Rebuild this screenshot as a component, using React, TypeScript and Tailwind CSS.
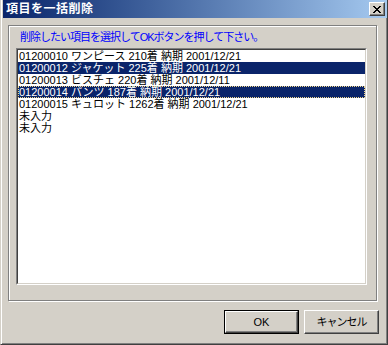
import React from "react";

const items = [
  { text: "01200010 ワンピース 210着 納期 2001/12/21", selected: false },
  { text: "01200012 ジャケット 225着 納期 2001/12/21", selected: true },
  { text: "01200013 ビスチェ 220着 納期 2001/12/11", selected: false },
  { text: "01200014 パンツ 187着 納期 2001/12/21", selected: true, focused: true },
  { text: "01200015 キュロット 1262着 納期 2001/12/21", selected: false },
  { text: "未入力", selected: false },
  { text: "未入力", selected: false },
];

const font = { fontFamily: '"Liberation Sans", "Noto Sans CJK JP", sans-serif' };

export default function App() {
  return (
    <div
      className="w-[388px] h-[345px] flex flex-col bg-[#d4d0c8] border-l border-r border-b border-l-[#d4d0c8] border-r-[#404040] border-b-[#404040] shadow-[inset_1px_0_0_#fff,inset_-1px_-1px_0_#808080] text-black"
      style={font}
    >
      {/* title bar */}
      <div className="h-[18px] flex items-center justify-between bg-linear-to-r from-[#0a246a] to-[#a6caf0] ml-[2px]">
        <span className="pl-[3px] text-white text-[12px] font-bold leading-[18px] tracking-[0.5px]">
          項目を一括削除
        </span>
        <button className="w-[16px] h-[14px] mr-[2px] flex items-center justify-center bg-[#d4d0c8] border border-t-white border-l-white border-r-[#404040] border-b-[#404040] shadow-[inset_-1px_-1px_0_#808080]">
          <svg width="8" height="7" viewBox="0 0 8 7" shapeRendering="crispEdges">
            <path
              d="M0 0h2v1h-2zM6 0h2v1h-2zM1 1h2v1h-2zM5 1h2v1h-2zM2 2h4v1h-4zM3 3h2v1h-2zM2 4h4v1h-4zM1 5h2v1h-2zM5 5h2v1h-2zM0 6h2v1h-2zM6 6h2v1h-2z"
              fill="#000"
            />
          </svg>
        </button>
      </div>

      {/* group box */}
      <div className="mt-[7px] ml-[7px] w-[369px] h-[276px] border border-[#808080] shadow-[inset_1px_1px_0_#fff,1px_1px_0_#fff] flex flex-col">
        <p className="mt-[4px] ml-[11px] text-[11px] leading-[14px] text-[#0000ff] tracking-[-1px]">
          削除したい項目を選択してOKボタンを押して下さい。
        </p>
        <div className="mt-[4px] ml-[7px] w-[351px] h-[237px] border border-t-[#808080] border-l-[#808080] border-r-white border-b-white">
          <div className="h-full border border-t-[#404040] border-l-[#404040] border-r-[#d4d0c8] border-b-[#d4d0c8] bg-white">
            {items.map((it, i) => (
              <div
                key={i}
                className={`h-[12px] pl-[1px] text-[11px] leading-[12px] whitespace-nowrap ${
                  it.selected ? "bg-[#0a246a] text-white" : "text-black"
                } ${it.focused ? "outline-1 outline-dotted outline-[#f0d68a] -outline-offset-1" : ""}`}
              >
                {it.text}
              </div>
            ))}
          </div>
        </div>
      </div>

      {/* buttons */}
      <div className="mt-[9px] mr-[8px] flex justify-end gap-[5px]">
        <button className="w-[75px] h-[24px] border border-black">
          <span className="flex items-center justify-center h-full border border-t-white border-l-white border-r-[#404040] border-b-[#404040] shadow-[inset_-1px_-1px_0_#808080] text-[11px]">
            OK
          </span>
        </button>
        <button className="w-[75px] h-[24px] flex items-center justify-center border border-t-white border-l-white border-r-[#404040] border-b-[#404040] shadow-[inset_-1px_-1px_0_#808080] text-[11px] tracking-[-1px]">
          キャンセル
        </button>
      </div>
    </div>
  );
}
